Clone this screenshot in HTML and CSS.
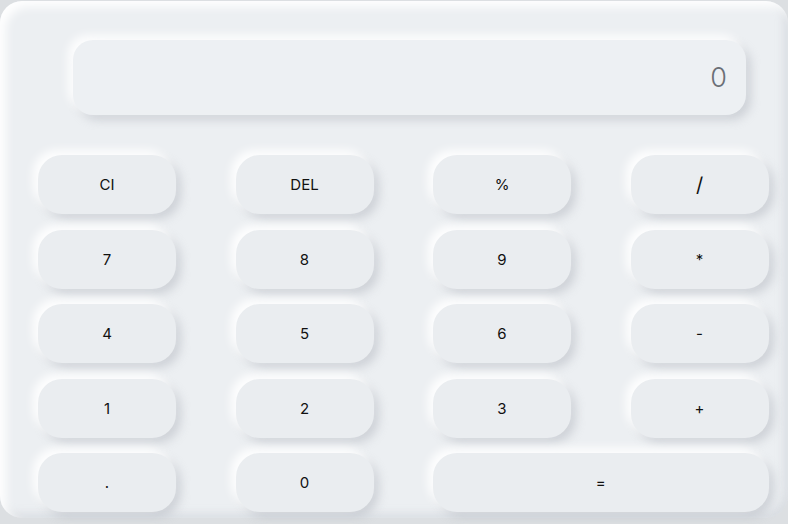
FILE: index.html
```html
<!DOCTYPE html>
<html>
<head>
<meta charset="utf-8">
<link rel="stylesheet" href="styles.css">
</head>
<body>
<div class="calc">
  <div class="display">0</div>
  <div class="keys">
    <button class="key">CI</button>
    <button class="key">DEL</button>
    <button class="key">%</button>
    <button class="key big">/</button>
    <button class="key">7</button>
    <button class="key">8</button>
    <button class="key">9</button>
    <button class="key">*</button>
    <button class="key">4</button>
    <button class="key">5</button>
    <button class="key">6</button>
    <button class="key">-</button>
    <button class="key">1</button>
    <button class="key">2</button>
    <button class="key">3</button>
    <button class="key">+</button>
    <button class="key">.</button>
    <button class="key">0</button>
    <button class="key wide">=</button>
  </div>
</div>
</body>
</html>
```
FILE: styles.css
```css
html, body {
  margin: 0;
  padding: 0;
}
body {
  background: #dcdfe2;
  width: 788px;
  height: 524px;
  overflow: hidden;
  font-family: "Inter", "Noto Sans", sans-serif;
}
.calc {
  box-sizing: border-box;
  margin-top: 1px;
  width: 788px;
  height: 517px;
  border-radius: 22px;
  background: #eceff2;
  box-shadow: inset 6px 6px 10px rgba(255,255,255,0.95),
              inset -4px -4px 8px rgba(180,186,194,0.35);
  padding: 39px 18px 0 38px;
}
.display {
  box-sizing: border-box;
  margin-left: 35px;
  width: 673px;
  height: 75px;
  border-radius: 20px;
  background: #edf0f3;
  box-shadow: -5px -5px 10px rgba(255,255,255,0.9),
              5px 5px 10px rgba(170,176,184,0.45);
  color: #6b6f76;
  font-size: 27px;
  font-weight: 300;
  text-align: right;
  line-height: 75px;
  padding-right: 19px;
}
.keys {
  margin-top: 40px;
  display: grid;
  grid-template-columns: repeat(4, 138px);
  grid-auto-rows: 59px;
  column-gap: 59.5px;
  row-gap: 15.5px;
}
.key {
  border: none;
  border-radius: 24px;
  background: #eaedf0;
  box-shadow: -5px -5px 10px rgba(255,255,255,0.95),
              5px 5px 10px rgba(170,176,184,0.45);
  font-family: inherit;
  font-size: 15px;
  color: #111;
  padding: 0;
}
.key.big {
  font-size: 20px;
}
.key.wide {
  grid-column: span 2;
}
```
